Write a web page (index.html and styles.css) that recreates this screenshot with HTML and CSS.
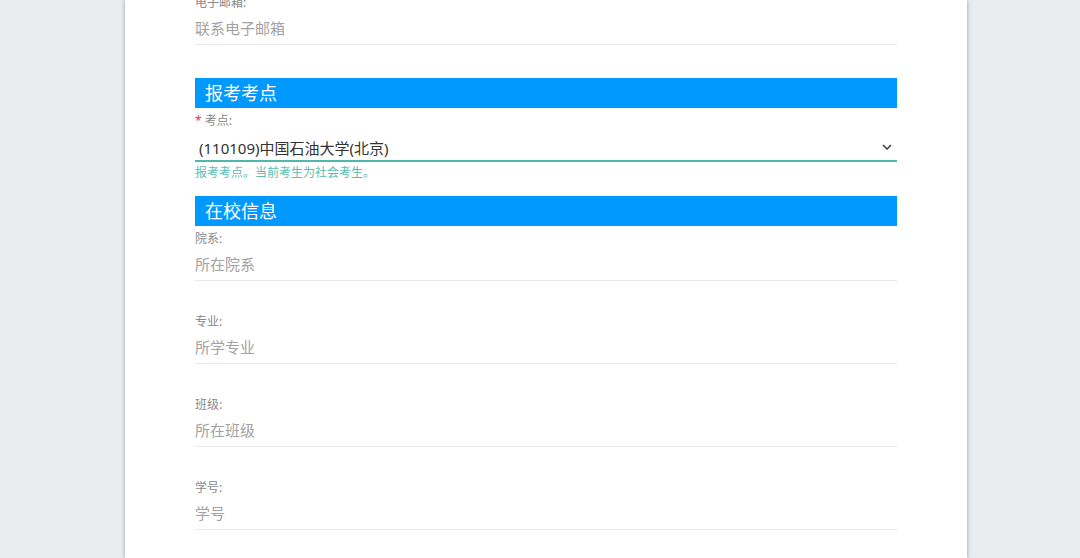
FILE: index.html
```html
<!DOCTYPE html>
<html lang="zh-CN">
<head>
<meta charset="utf-8">
<title>报名信息</title>
<link rel="stylesheet" href="styles.css">
</head>
<body>
<div class="page">
  <div class="card">
    <form class="form">
      <div class="field">
        <div class="label">电子邮箱:</div>
        <div class="input placeholder">联系电子邮箱</div>
      </div>

      <div class="section">报考考点</div>
      <div class="field-select">
        <div class="label"><span class="req">*</span> 考点:</div>
        <div class="select">
          <span>(110109)中国石油大学(北京)</span>
          <svg class="chev" width="10" height="6" viewBox="0 0 10 6"><polyline points="1,1 5,5 9,1" fill="none" stroke="#444" stroke-width="1.6"/></svg>
        </div>
        <div class="help">报考考点。当前考生为社会考生。</div>
      </div>

      <div class="section">在校信息</div>
      <div class="field">
        <div class="label">院系:</div>
        <div class="input placeholder">所在院系</div>
      </div>
      <div class="field">
        <div class="label">专业:</div>
        <div class="input placeholder">所学专业</div>
      </div>
      <div class="field">
        <div class="label">班级:</div>
        <div class="input placeholder">所在班级</div>
      </div>
      <div class="field last">
        <div class="label">学号:</div>
        <div class="input placeholder">学号</div>
      </div>
    </form>
  </div>
</div>
</body>
</html>
```

FILE: styles.css
```css
html, body {
  margin: 0;
  padding: 0;
  height: 100%;
  overflow: hidden;
}
body {
  background: #e9edf0;
  font-family: "Noto Sans", "Noto Sans CJK SC", sans-serif;
}
.page {
  padding-left: 125px;
  height: 100%;
}
.card {
  display: flow-root;
  width: 842px;
  height: 100%;
  background: #fff;
  box-shadow: 0 0 4px rgba(0, 0, 0, 0.35);
  padding: 0 70px;
  box-sizing: border-box;
  overflow: hidden;
}
.form {
  margin-top: -6px;
  display: flex;
  flex-direction: column;
}
.label {
  font-size: 12px;
  line-height: 18px;
  height: 18px;
  color: #888;
}
.req {
  color: #e33;
}
.field {
  margin-bottom: 32px;
}
.field.last {
  margin-bottom: 0;
}
.input {
  height: 32px;
  line-height: 32px;
  border-bottom: 1px solid #eaeaea;
  font-size: 15px;
}
.placeholder {
  color: #a2a2a2;
}
.section {
  height: 30px;
  line-height: 30px;
  background: #0099ff;
  color: #fff;
  font-size: 18px;
  padding-left: 10px;
  margin-top: 1px;
  margin-bottom: 4px;
}
.field-select {
  margin-bottom: 13px;
}
.select {
  display: flex;
  align-items: center;
  justify-content: space-between;
  height: 24px;
  padding: 5px 5px 1px 4px;
  border-bottom: 2px solid #4fb8ad;
  font-size: 15px;
  color: #333;
}
.help {
  font-size: 12px;
  line-height: 18px;
  margin-top: 2px;
  color: #5bbdb0;
}
```
